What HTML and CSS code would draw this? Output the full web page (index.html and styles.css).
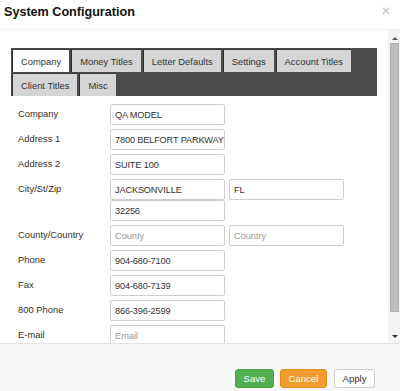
FILE: index.html
```html
<!DOCTYPE html>
<html lang="en">
<head>
<meta charset="utf-8">
<title>System Configuration</title>
<link rel="stylesheet" href="styles.css">
</head>
<body>
<div class="dialog">
  <div class="header">
    <h1 class="title">System Configuration</h1>
    <span class="close">&#x2715;</span>
  </div>
  <div class="body">
    <div class="content">
      <div class="tabs">
        <span class="tab active">Company</span>
        <span class="tab">Money Titles</span>
        <span class="tab">Letter Defaults</span>
        <span class="tab">Settings</span>
        <span class="tab">Account Titles</span>
        <span class="tab">Client Titles</span>
        <span class="tab">Misc</span>
      </div>
      <div class="form">
        <div class="row"><label class="label">Company</label><div class="fields"><input class="input" value="QA MODEL"></div></div>
        <div class="row"><label class="label">Address 1</label><div class="fields"><input class="input" value="7800 BELFORT PARKWAY"></div></div>
        <div class="row"><label class="label">Address 2</label><div class="fields"><input class="input" value="SUITE 100"></div></div>
        <div class="row"><label class="label">City/St/Zip</label><div class="fields"><input class="input" value="JACKSONVILLE"><input class="input" value="FL"><input class="input" value="32256"></div></div>
        <div class="row"><label class="label">County/Country</label><div class="fields"><input class="input" placeholder="County"><input class="input" placeholder="Country"></div></div>
        <div class="row"><label class="label">Phone</label><div class="fields"><input class="input" value="904-680-7100"></div></div>
        <div class="row"><label class="label">Fax</label><div class="fields"><input class="input" value="904-680-7139"></div></div>
        <div class="row"><label class="label">800 Phone</label><div class="fields"><input class="input" value="866-396-2599"></div></div>
        <div class="row"><label class="label">E-mail</label><div class="fields"><input class="input" placeholder="Email"></div></div>
      </div>
    </div>
    <div class="scrollbar">
      <div class="sb-btn"><span class="arrow-up"></span></div>
      <div class="sb-track"><div class="sb-thumb"></div></div>
      <div class="sb-btn"><span class="arrow-down"></span></div>
    </div>
  </div>
  <div class="footer">
    <button class="btn btn-save">Save</button>
    <button class="btn btn-cancel">Cancel</button>
    <button class="btn btn-apply">Apply</button>
  </div>
</div>
</body>
</html>
```
FILE: styles.css
```css
* { box-sizing: border-box; }
html, body { margin: 0; padding: 0; background: #fff; }
body { font-family: "Liberation Sans", Arial, sans-serif; font-size: 9.4px; color: #333; }

.dialog { width: 400px; height: 391px; display: flex; flex-direction: column; background: #fff; overflow: hidden; }

.header { height: 30px; flex: none; display: flex; align-items: flex-start; justify-content: space-between; padding: 4px 9px 0 4px; border-bottom: 1px solid #ececec; }
.title { margin: 0; font-size: 12.6px; font-weight: bold; color: #111; line-height: 16px; }
.close { color: #c4c4c4; font-size: 12px; line-height: 12px; margin-top: 1px; }

.body { height: 313px; flex: none; display: flex; }
.content { flex: 1; overflow: hidden; padding: 18px 0 0 11px; }

.tabs { width: 366px; background: #4a4a4a; display: flex; flex-wrap: wrap; gap: 1px 2px; padding: 1px 0 0 1px; }
.tab { height: 23px; line-height: 23px; padding: 0 8px; background: #d5d5d5; color: #333; border-left: 1px solid #2e2e2e; border-top: 1px solid #3a3a3a; white-space: nowrap; }
.tab.active { background: #fff; }

.form { margin: 8px 0 0 7px; display: flex; flex-direction: column; gap: 4px; }
.row { display: flex; align-items: flex-start; }
.label { width: 92px; flex: none; line-height: 20px; color: #3a2e20; }
.fields { display: grid; grid-template-columns: 115px 115px; column-gap: 4px; }
.input { width: 115px; height: 21px; border: 1px solid #cfcfcf; border-radius: 2px; padding: 0 0 0 4px; font-family: inherit; font-size: 9.2px; letter-spacing: -0.15px; color: #333; background: #fff; outline: none; }
.input::placeholder { color: #999; letter-spacing: 0; }

.scrollbar { width: 12px; flex: none; display: flex; flex-direction: column; background: #f3f3f3; padding: 0 1px 0 2px; }
.sb-btn { height: 13px; flex: none; display: flex; align-items: center; justify-content: center; }
.sb-track { flex: 1; display: flex; flex-direction: column; padding-bottom: 18px; }
.sb-thumb { flex: 1; background: #bdbdbd; border: 1px solid #b0b0b0; }
.arrow-up { width: 0; height: 0; border-left: 3px solid transparent; border-right: 3px solid transparent; border-bottom: 3px solid #555; margin-top: 4px; }
.arrow-down { width: 0; height: 0; border-left: 3px solid transparent; border-right: 3px solid transparent; border-top: 3px solid #333; margin-bottom: 1px; }

.footer { flex: 1; background: #f8f8f8; border-top: 1px solid #e3e3e3; display: flex; justify-content: flex-end; align-items: flex-end; gap: 6px; padding: 0 25px 3px 0; }
.btn { height: 19px; border-radius: 3px; font-family: inherit; font-size: 9.6px; padding: 0; cursor: pointer; }
.btn-save { width: 39px; background: #53ad53; border: 1px solid #46a046; color: #fff; }
.btn-cancel { width: 47px; background: #f39b2c; border: 1px solid #e38d1f; color: #fff; margin-right: 1px; }
.btn-apply { width: 41px; background: #fff; border: 1px solid #ccc; color: #333; }
```
